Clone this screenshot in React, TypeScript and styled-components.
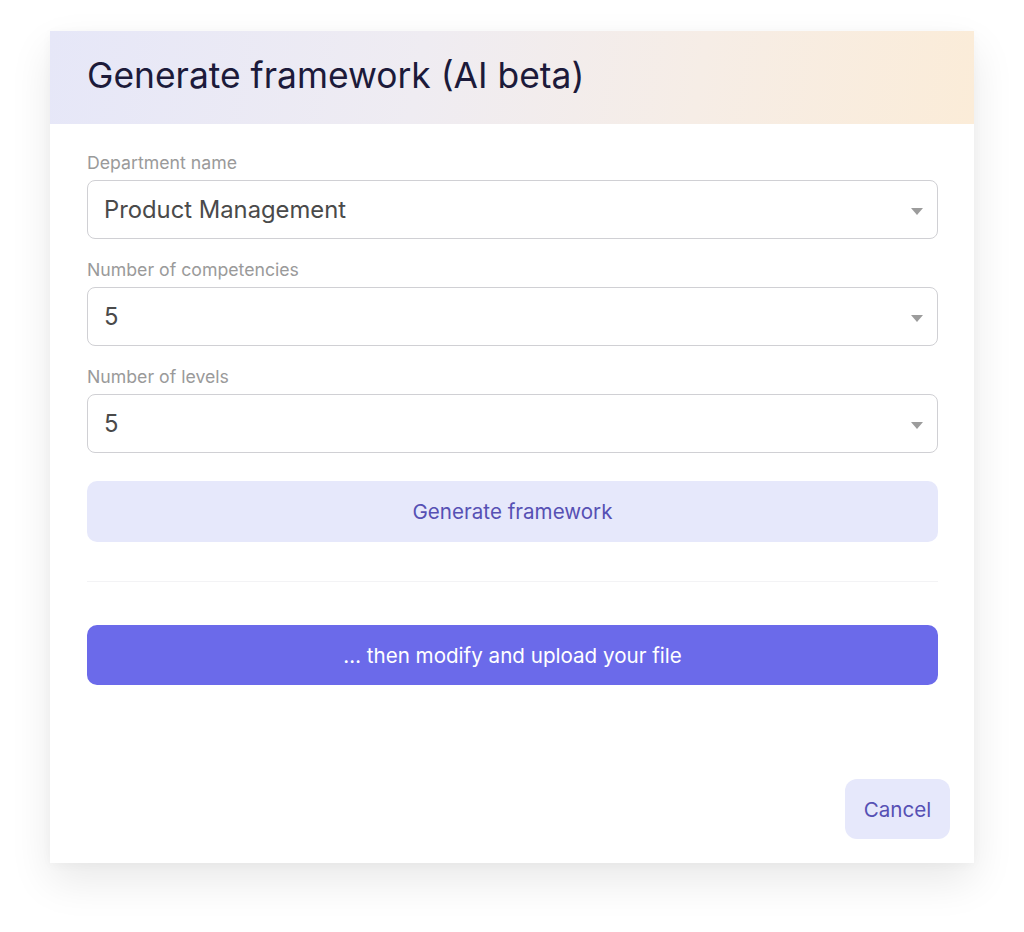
import React from "react";
import styled, { createGlobalStyle } from "styled-components";

const Global = createGlobalStyle`
  html, body { margin: 0; padding: 0; background: #ffffff; }
  body { font-family: "Inter", "Noto Sans", sans-serif; }
  * { box-sizing: border-box; }
`;

const Page = styled.div`
  width: 1024px;
  height: 932px;
  padding: 31px 50px 0 50px;
`;

const Card = styled.div`
  width: 924px;
  height: 832px;
  background: #ffffff;
  display: flex;
  flex-direction: column;
  box-shadow: 0 18px 40px rgba(0, 0, 0, 0.09), 0 2px 10px rgba(0, 0, 0, 0.03);
`;

const Header = styled.div`
  height: 93px;
  display: flex;
  align-items: center;
  padding: 0 37px 5px;
  background: linear-gradient(100deg, #e6e7f8 0%, #efecf2 40%, #f6ede6 70%, #fbecd8 100%);
`;

const Title = styled.h1`
  margin: 0;
  font-family: "Inter", sans-serif;
  font-weight: 400;
  font-size: 35.4px;
  letter-spacing: 0px;
  color: #1c1a3a;
`;

const Body = styled.div`
  flex: 1;
  padding: 29px 36px 0 37px;
  display: flex;
  flex-direction: column;
`;

const Field = styled.div`
  display: flex;
  flex-direction: column;
  gap: 7px;
  margin-bottom: 21px;
`;

const Label = styled.div`
  font-size: 17.7px;
  line-height: 20px;
  color: #9a9a9a;
`;

const SelectBox = styled.div`
  height: 59px;
  border: 1px solid #d0d0d4;
  border-radius: 8px;
  display: flex;
  align-items: center;
  justify-content: space-between;
  padding: 0 14px 0 16px;
  font-size: 23.8px;
  color: #4a4a4a;
`;

const Caret = styled.span`
  width: 0;
  height: 0;
  border-left: 6.5px solid transparent;
  border-right: 6.5px solid transparent;
  border-top: 7px solid #9c9c9c;
  margin-top: 3px;
`;

const Button = styled.button<{ $primary?: boolean }>`
  height: ${(p) => (p.$primary ? "60px" : "61px")};
  width: 100%;
  border: none;
  border-radius: 10px;
  font-family: "Inter", sans-serif;
  font-size: 20.6px;
  background: ${(p) => (p.$primary ? "#6b6aea" : "#e6e8fb")};
  color: ${(p) => (p.$primary ? "#ffffff" : "#5650b4")};
  cursor: pointer;
`;

const Spacer = styled.div`
  height: 7px;
`;

const Divider = styled.hr`
  border: none;
  border-top: 1px solid #f3f3f5;
  margin: 39px 0 43px;
`;

const Footer = styled.div`
  display: flex;
  justify-content: flex-end;
  padding: 0 24px 24px;
`;

const CancelButton = styled.button`
  width: 105px;
  height: 60px;
  border: none;
  border-radius: 12px;
  background: #e6e8fb;
  color: #5650b4;
  font-family: "Inter", sans-serif;
  font-size: 20.6px;
`;

const fields = [
  { label: "Department name", value: "Product Management" },
  { label: "Number of competencies", value: "5" },
  { label: "Number of levels", value: "5" },
];

export default function App() {
  return (
    <>
      <Global />
      <Page>
        <Card>
          <Header>
            <Title>Generate framework (AI beta)</Title>
          </Header>
          <Body>
            {fields.map((f) => (
              <Field key={f.label}>
                <Label>{f.label}</Label>
                <SelectBox>
                  <span>{f.value}</span>
                  <Caret />
                </SelectBox>
              </Field>
            ))}
            <Spacer />
            <Button>Generate framework</Button>
            <Divider />
            <Button $primary>… then modify and upload your file</Button>
          </Body>
          <Footer>
            <CancelButton>Cancel</CancelButton>
          </Footer>
        </Card>
      </Page>
    </>
  );
}
